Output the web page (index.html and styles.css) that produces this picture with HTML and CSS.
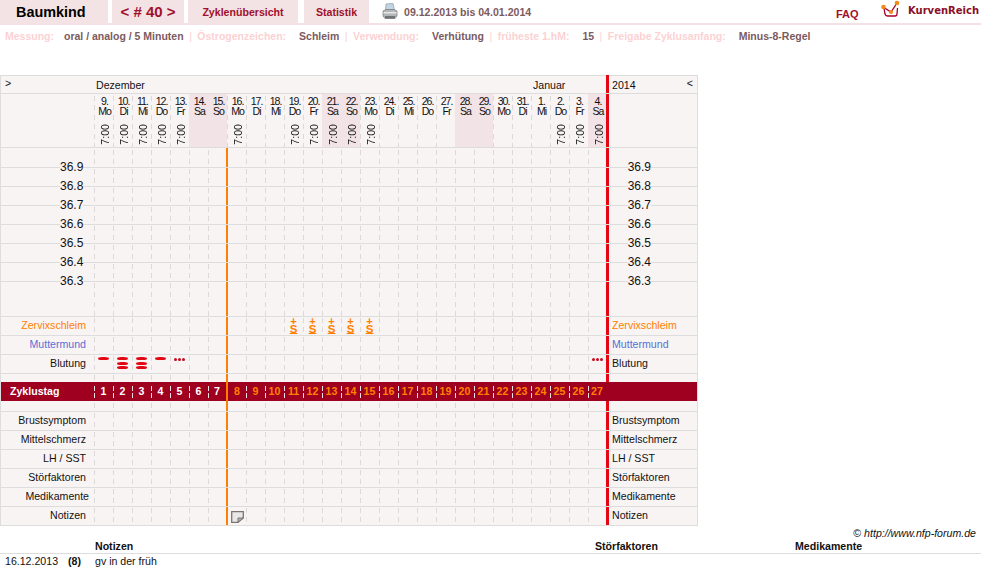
FILE: index.html
```html
<!DOCTYPE html>
<html lang="de">
<head>
<meta charset="utf-8">
<title>Baumkind</title>
<link rel="stylesheet" href="styles.css">
</head>
<body>
<header class="topbar">
  <div class="tab tab-name">Baumkind</div>
  <div class="tab tab-cycle">&lt; # 40 &gt;</div>
  <div class="tab tab-over">Zyklenübersicht</div>
  <div class="tab tab-stat">Statistik</div>
  <svg class="printer" width="16" height="17" viewBox="0 0 16 17">
    <path d="M4 1 L11 0.5 L12.5 7 L3.5 7 Z" fill="#c3d4e2" stroke="#8b9aa8" stroke-width=".7"/>
    <path d="M1 8 L4 6.5 L12 6.5 L15 8 L15 13 L13 15.5 L3 15.5 L1 13 Z" fill="#b4b6b8" stroke="#777" stroke-width=".7"/>
    <path d="M1.5 9 L14.5 9 L14.5 10.5 L1.5 10.5 Z" fill="#e6e6e6"/>
    <path d="M3 13 L13 13 L13 15.5 L3 15.5 Z" fill="#6f7376"/>
  </svg>
  <div class="range">09.12.2013 bis 04.01.2014</div>
  <div class="faq">FAQ</div>
  <svg class="logo" width="20" height="18" viewBox="0 0 20 18">
    <path d="M3 8 L4 14 Q4.5 16 6.500 16 L14 16 Q16 16 16 14 L16.500 8" fill="none" stroke="#a8002a" stroke-width="1.3"/>
    <path d="M2 7 L10 12 L16 3" fill="none" stroke="#a8002a" stroke-width="1.3"/>
    <circle cx="2.500" cy="7" r="2.300" fill="#f08a1c"/>
    <circle cx="10" cy="12" r="2.100" fill="#f08a1c"/>
    <circle cx="16" cy="3" r="2.300" fill="#f08a1c"/>
  </svg>
  <div class="brand">KurvenReich</div>
</header>

<div class="meta">
  <span class="mk mk-tight">Messung:</span><span class="mv">oral / analog / 5 Minuten</span><span class="ms">|</span>
  <span class="mk">Östrogenzeichen:</span><span class="mv">Schleim</span><span class="ms">|</span>
  <span class="mk">Verwendung:</span><span class="mv">Verhütung</span><span class="ms">|</span>
  <span class="mk">früheste 1.hM:</span><span class="mv">15</span><span class="ms">|</span>
  <span class="mk">Freigabe Zyklusanfang:</span><span class="mv">Minus-8-Regel</span>
</div>

<main class="chart">
  <div class="dash dash-head"></div>
  <div class="dash dash-temp"></div>
  <div class="dash dash-low"></div>
  <div class="vline vline-orange"></div>
  <div class="vline vline-red"></div>

  <div class="row row-month">
    <div class="lab lab-toggle">&gt;</div>
    <div class="months"><span class="mon-dec">Dezember</span><span>Januar</span></div>
    <div class="gap"></div>
    <div class="rlab rlab-year"><span>2014</span><span class="toggle-r">&lt;</span></div>
  </div>

  <div class="row row-dates">
    <div class="lab"></div>
    <div class="days">
      <div class="d"><span>9.</span><span>Mo</span><b>7:00</b></div>
      <div class="d"><span>10.</span><span>Di</span><b>7:00</b></div>
      <div class="d"><span>11.</span><span>Mi</span><b>7:00</b></div>
      <div class="d"><span>12.</span><span>Do</span><b>7:00</b></div>
      <div class="d"><span>13.</span><span>Fr</span><b>7:00</b></div>
      <div class="d we"><span>14.</span><span>Sa</span></div>
      <div class="d we"><span>15.</span><span>So</span></div>
      <div class="d"><span>16.</span><span>Mo</span><b>7:00</b></div>
      <div class="d"><span>17.</span><span>Di</span></div>
      <div class="d"><span>18.</span><span>Mi</span></div>
      <div class="d"><span>19.</span><span>Do</span><b>7:00</b></div>
      <div class="d"><span>20.</span><span>Fr</span><b>7:00</b></div>
      <div class="d we"><span>21.</span><span>Sa</span><b>7:00</b></div>
      <div class="d we"><span>22.</span><span>So</span><b>7:00</b></div>
      <div class="d"><span>23.</span><span>Mo</span><b>7:00</b></div>
      <div class="d"><span>24.</span><span>Di</span></div>
      <div class="d"><span>25.</span><span>Mi</span></div>
      <div class="d"><span>26.</span><span>Do</span></div>
      <div class="d"><span>27.</span><span>Fr</span></div>
      <div class="d we"><span>28.</span><span>Sa</span></div>
      <div class="d we"><span>29.</span><span>So</span></div>
      <div class="d"><span>30.</span><span>Mo</span></div>
      <div class="d"><span>31.</span><span>Di</span></div>
      <div class="d"><span>1.</span><span>Mi</span></div>
      <div class="d"><span>2.</span><span>Do</span><b>7:00</b></div>
      <div class="d"><span>3.</span><span>Fr</span><b>7:00</b></div>
      <div class="d we"><span>4.</span><span>Sa</span><b>7:00</b></div>
    </div>
    <div class="gap"></div>
    <div class="rlab"></div>
  </div>

  <section class="temps">
    <div class="trow"><span class="tl">36.9</span><span class="tr">36.9</span></div>
    <div class="trow"><span class="tl">36.8</span><span class="tr">36.8</span></div>
    <div class="trow"><span class="tl">36.7</span><span class="tr">36.7</span></div>
    <div class="trow"><span class="tl">36.6</span><span class="tr">36.6</span></div>
    <div class="trow"><span class="tl">36.5</span><span class="tr">36.5</span></div>
    <div class="trow"><span class="tl">36.4</span><span class="tr">36.4</span></div>
    <div class="trow"><span class="tl">36.3</span><span class="tr">36.3</span></div>
  </section>

  <div class="row">
    <div class="lab orange">Zervixschleim</div>
    <div class="days">
      <div class="mucus c11"><span>+</span><u>S</u></div>
      <div class="mucus c12"><span>+</span><u>S</u></div>
      <div class="mucus c13"><span>+</span><u>S</u></div>
      <div class="mucus c14"><span>+</span><u>S</u></div>
      <div class="mucus c15"><span>+</span><u>S</u></div>
    </div>
    <div class="gap"></div>
    <div class="rlab orange">Zervixschleim</div>
  </div>
  <div class="row">
    <div class="lab blue">Muttermund</div>
    <div class="days"></div>
    <div class="gap"></div>
    <div class="rlab blue">Muttermund</div>
  </div>
  <div class="row">
    <div class="lab">Blutung</div>
    <div class="days">
      <div class="flow c1"><i class="bar"></i></div>
      <div class="flow c2"><i class="bar"></i><i class="bar"></i><i class="bar"></i></div>
      <div class="flow c3"><i class="bar"></i><i class="bar"></i><i class="bar"></i></div>
      <div class="flow c4"><i class="bar"></i></div>
      <div class="flow flow-dots c5"><i class="dot"></i><i class="dot"></i><i class="dot"></i></div>
      <div class="flow flow-dots c27"><i class="dot"></i><i class="dot"></i><i class="dot"></i></div>
    </div>
    <div class="gap"></div>
    <div class="rlab">Blutung</div>
  </div>
  <div class="spacer-top"></div>
  <div class="cycle">
    <div class="cycle-lab">Zyklustag</div>
    <div class="cycle-days">
      <span class="cd">1</span><span class="cd">2</span><span class="cd">3</span><span class="cd">4</span><span class="cd">5</span><span class="cd">6</span><span class="cd cd-last">7</span><span class="cd cd-first post">8</span><span class="cd post">9</span><span class="cd post">10</span><span class="cd post">11</span><span class="cd post">12</span><span class="cd post">13</span><span class="cd post">14</span><span class="cd post">15</span><span class="cd post">16</span><span class="cd post">17</span><span class="cd post">18</span><span class="cd post">19</span><span class="cd post">20</span><span class="cd post">21</span><span class="cd post">22</span><span class="cd post">23</span><span class="cd post">24</span><span class="cd post">25</span><span class="cd post">26</span><span class="cd post">27</span>
    </div>
  </div>
  <div class="spacer-bottom"></div>
  <div class="row"><div class="lab">Brustsymptom</div><div class="days"></div><div class="gap"></div><div class="rlab">Brustsymptom</div></div>
  <div class="row"><div class="lab">Mittelschmerz</div><div class="days"></div><div class="gap"></div><div class="rlab">Mittelschmerz</div></div>
  <div class="row"><div class="lab">LH / SST</div><div class="days"></div><div class="gap"></div><div class="rlab">LH / SST</div></div>
  <div class="row"><div class="lab">Störfaktoren</div><div class="days"></div><div class="gap"></div><div class="rlab">Störfaktoren</div></div>
  <div class="row"><div class="lab lab-wide">Medikamente</div><div class="days"></div><div class="gap"></div><div class="rlab">Medikamente</div></div>
  <div class="row row-end">
    <div class="lab">Notizen</div>
    <div class="days">
      <svg class="note c8" width="13" height="12" viewBox="0 0 13 12">
        <path d="M.7 .7 H12.300 V7 L7 11.300 H.7 Z" fill="#e8e8e8" stroke="#7b7474" stroke-width="1.300"/>
        <path d="M7 11.300 V7 H12.300 Z" fill="#b5b0b0" stroke="#7b7474"/>
      </svg>
    </div>
    <div class="gap"></div>
    <div class="rlab">Notizen</div>
  </div>
</main>

<div class="copy"><span class="copy-sign">©</span> http://www.nfp-forum.de</div>

<section class="notes">
  <div class="nrow nhead">
    <span class="n-date"></span><span class="n-day"></span>
    <span class="n-note">Notizen</span><span class="n-dist">Störfaktoren</span><span>Medikamente</span>
  </div>
  <div class="nrow">
    <span class="n-date">16.12.2013</span><span class="n-day">(8)</span>
    <span class="n-note">gv in der früh</span><span class="n-dist"></span><span></span>
  </div>
</section>
</body>
</html>
```
FILE: styles.css
```css
* { box-sizing: border-box; }
html, body { margin: 0; padding: 0; background: #fff; overflow: hidden; }
body {
  font-family: "Liberation Sans", Arial, sans-serif;
  font-size: 10.6px;
  color: #111;
  width: 981px;
  height: 585px;
}

/* top bar */
.topbar {
  display: flex;
  height: 25px;
  border-bottom: 2px solid #f3e1e4;
}
.tab {
  background: #f3e3e5;
  height: 23px;
  display: flex;
  align-items: center;
  justify-content: center;
  font-weight: bold;
  color: #a0102c;
}
.tab-name { width: 108px; font-size: 14.4px; color: #000; justify-content: flex-start; padding-left: 16px; margin-right: 4px; }
.tab-cycle { width: 72px; font-size: 15px; margin-right: 4px; }
.tab-over { width: 110px; margin-right: 6px; }
.tab-stat { width: 65px; }
.printer { margin: 3px 0 0 13px; }
.range { margin: 6px 0 0 6px; font-weight: bold; color: #7d5a60; width: 432px; line-height: 13px; }
.faq { margin-top: 8px; width: 45px; font-size: 11px; font-weight: bold; color: #a0102c; line-height: 13px; }
.logo { margin-top: 0; }
.brand {
  margin: 5px 0 0 7px;
  font-family: "DejaVu Sans", Verdana, sans-serif;
  font-size: 10px;
  font-weight: bold;
  color: #8a0f2a;
  line-height: 12px;
}

/* settings line */
.meta {
  display: flex;
  height: 50px;
  padding: 5px 0 0 5px;
  font-size: 10.5px;
  font-weight: bold;
  line-height: 13px;
}
.mk { color: #fbd2d3; margin-right: 13px; }
.mk-tight { margin-right: 10px; }
.mv { color: #7b5a60; margin-right: 5.5px; }
.ms { color: #fbd2d3; margin-right: 5.5px; font-weight: normal; }

/* chart frame */
.chart {
  position: relative;
  width: 698px;
  height: 451px;
  background: #f9f4f4;
  border: 1px solid #ddd;
}
.dash {
  position: absolute;
  left: 93px;
  width: 512px;
  background: repeating-linear-gradient(to right, #dcd9d8 0 1px, transparent 1px 19px);
  -webkit-mask: linear-gradient(to bottom, transparent 2px, #000 2px 7px, transparent 7px 11px, #000 11px 16px, transparent 16px) 0 0 / 100% 19px;
  mask: linear-gradient(to bottom, transparent 2px, #000 2px 7px, transparent 7px 11px, #000 11px 16px, transparent 16px) 0 0 / 100% 19px;
}
.dash-head { top: 18px; height: 53px; }
.dash-temp { top: 72px; height: 168px; }
.dash-low { top: 240px; bottom: 0; }
.vline { position: absolute; bottom: 0; }
.vline-orange { left: 225px; top: 71px; width: 2px; background: #ff8000; }
.vline-red { left: 605px; top: -1px; width: 3px; background: #e30613; bottom: 0; }

.row {
  position: relative;
  z-index: 1;
  display: flex;
  height: 19px;
  border-bottom: 1px solid #ddd;
  line-height: 17px;
}
.row-end { border-bottom: 0; }
.row-month { height: 18px; line-height: 19px; }
.row-dates { height: 54px; }
.lab { width: 93px; flex: none; text-align: right; padding-right: 8px; }
.lab-wide { padding-right: 5px; }
.lab-toggle { text-align: left; padding-left: 4px; line-height: 14px; }
.days {
  width: 512px;
  flex: none;
  display: grid;
  grid-template-columns: repeat(26, 19px) 18px;
  grid-template-rows: 18px;
}
.months { width: 512px; flex: none; display: flex; padding-left: 2px; }
.mon-dec { width: 437px; }
.gap { width: 3px; flex: none; }
.rlab { flex: 1; padding-left: 3px; }
.rlab-year { display: flex; justify-content: space-between; padding-right: 4px; }
.toggle-r { line-height: 14px; }
.orange { color: #ff8000; }
.blue { color: #5570d6; }

/* date header */
.row-dates .days { grid-template-rows: 53px; }
.d {
  display: flex;
  flex-direction: column;
  align-items: center;
  padding: 2px 0 0 2px;
  line-height: 10px;
  letter-spacing: -1px;
  position: relative;
}
.d.we { background: #f2e3e6; }
.d b {
  position: absolute;
  top: 30px;
  left: 6px;
  font-weight: normal;
  writing-mode: vertical-rl;
  transform: rotate(180deg);
  letter-spacing: 0;
  line-height: 10px;
}

/* temperature area */
.temps {
  position: relative;
  z-index: 1;
  height: 169px;
  padding-top: 10px;
  border-bottom: 1px solid #ddd;
}
.trow {
  display: flex;
  justify-content: space-between;
  height: 19px;
  padding: 0 46px 0 59px;
  font-size: 12px;
  line-height: 19px;
  background: linear-gradient(to bottom, transparent 9px, #ddd 9px, #ddd 10px, transparent 10px);
}
.tl, .tr { background: #f9f4f4; }

/* column placement */
.c1 { grid-column: 1; } .c2 { grid-column: 2; } .c3 { grid-column: 3; } .c4 { grid-column: 4; }
.c5 { grid-column: 5; } .c8 { grid-column: 8; } .c11 { grid-column: 11; } .c12 { grid-column: 12; }
.c13 { grid-column: 13; } .c14 { grid-column: 14; } .c15 { grid-column: 15; } .c27 { grid-column: 27; }
.days > * { grid-row: 1; }

.mucus {
  display: flex;
  flex-direction: column;
  align-items: center;
  color: #ff8000;
  font-weight: bold;
  line-height: 6px;
  font-size: 11px;
  padding-top: 1px;
}
.mucus u { font-size: 11.500px; line-height: 10px; text-underline-offset: 0; }

.flow {
  display: flex;
  flex-direction: column;
  align-items: center;
  padding-top: 2px;
  gap: 1.5px;
}
.flow .bar { display: block; width: 11px; height: 3px; border-radius: 4px / 50%; background: #e30613; }
.flow-dots { flex-direction: row; justify-content: center; align-items: flex-start; gap: 1px; padding-top: 3px; }
.flow .dot { display: block; width: 3px; height: 3px; border-radius: 50%; background: #c80a20; }

.spacer-top { height: 8px; }
.spacer-bottom {
  position: relative;
  z-index: 1;
  height: 11px;
  border-bottom: 1px solid #ddd;
}

/* cycle-day band */
.cycle {
  position: relative;
  z-index: 1;
  display: flex;
  height: 19px;
  background: #a0001f;
  color: #fff;
  font-weight: bold;
  line-height: 19px;
}
.cycle-lab { width: 93px; flex: none; padding-left: 9px; }
.cycle-days {
  display: grid;
  grid-template-columns: repeat(26, 19px) 18px;
  width: 512px;
}
.cd {
  text-align: center;
  background: linear-gradient(to bottom, transparent 4px, #f3dfe0 4px 9px, transparent 9px 11px, #f3dfe0 11px 16px, transparent 16px) left top / 1px 100% no-repeat;
}
.post { color: #ff8000; }
.cd-last { border-right: 1px solid #ff8000; }
.cd-first { border-left: 1px solid #ff8000; background: none; }

.note { margin: 4px 0 0 4px; }

/* below chart */
.copy {
  width: 976px;
  height: 13px;
  margin-top: 1px;
  text-align: right;
  font-style: italic;
  line-height: 13px;
}
.copy-sign { font-style: normal; }
.notes { margin-top: 0; }
.nrow { display: flex; height: 14px; line-height: 14px; }
.nhead { height: 14px; line-height: 12px; font-weight: bold; border-bottom: 1px solid #ddd; }
.n-date { width: 63px; padding-left: 5px; flex: none; }
.n-day { width: 32px; padding-left: 5px; flex: none; font-weight: bold; }
.n-note { width: 500px; flex: none; }
.n-dist { width: 200px; flex: none; }
```
